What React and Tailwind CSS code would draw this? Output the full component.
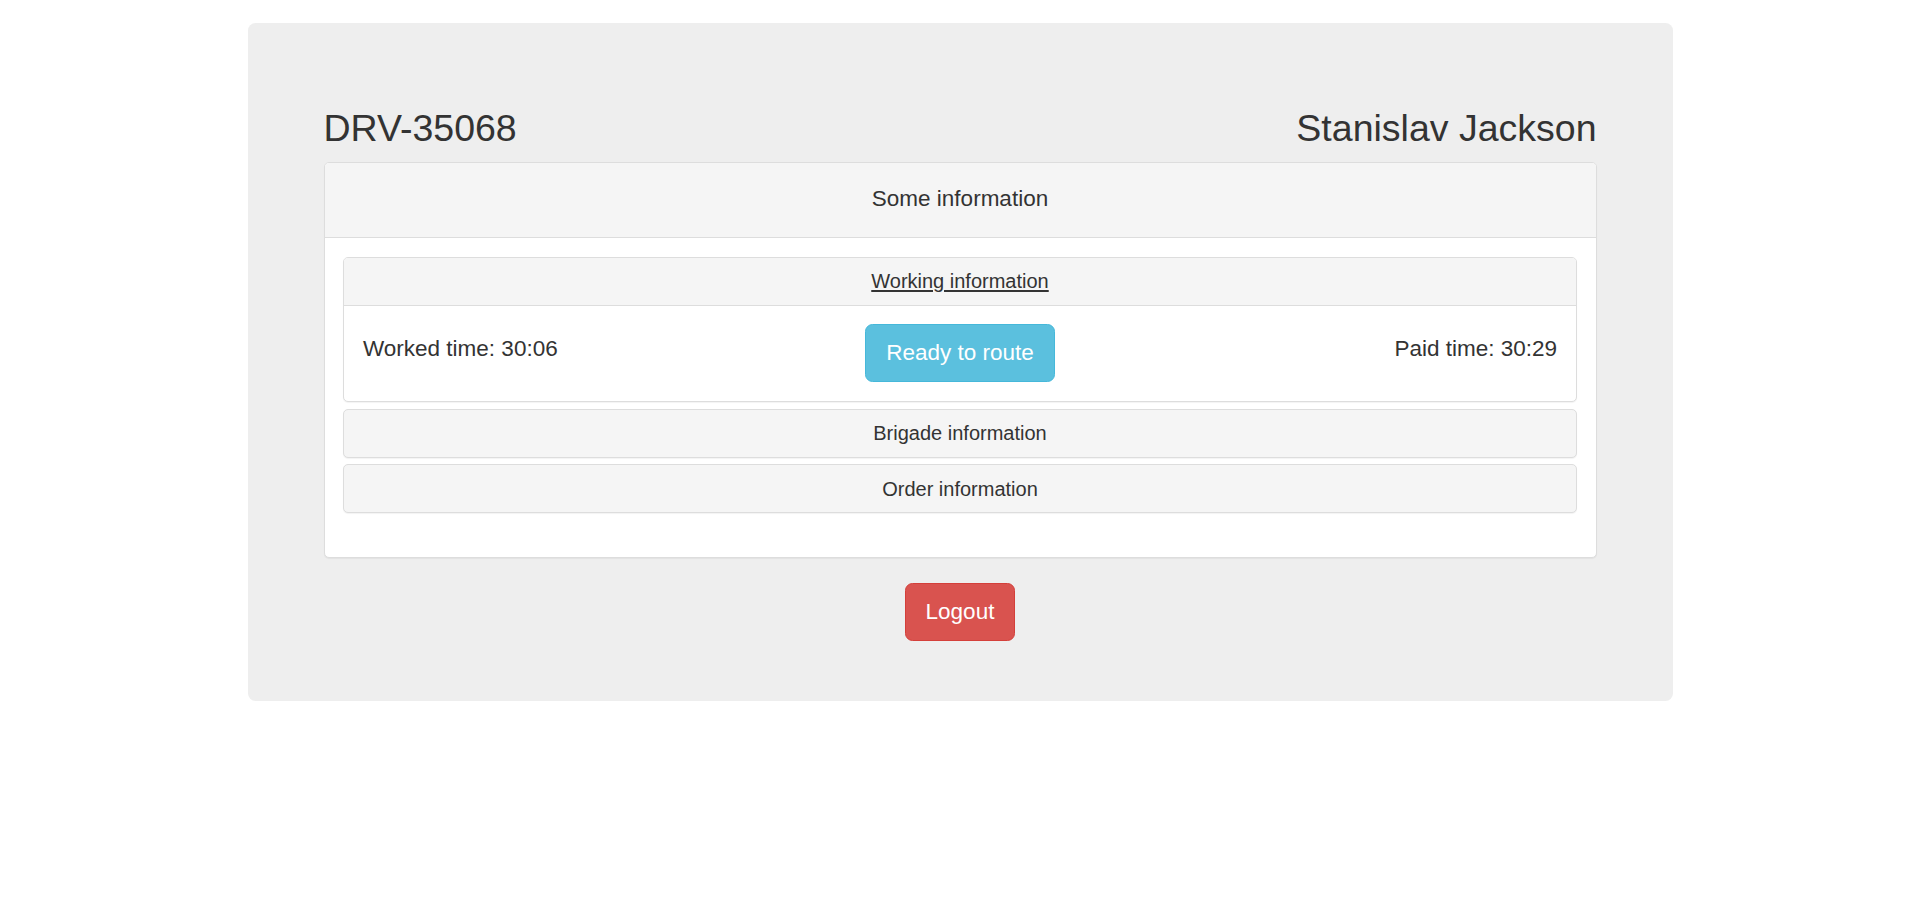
export default function App() {
  return (
    <div className="min-h-screen bg-white pt-[23px] font-['Liberation_Sans',Arial,Helvetica,sans-serif] text-[#333333]">
      <div className="mx-auto w-[1425px] rounded-[7.5px] bg-[#eeeeee] px-[76px] pt-[60px] pb-[60px]">
        <div className="mt-[25px] mb-[12.5px] flex items-start justify-between">
          <h2 className="text-[37.5px] font-normal leading-[1.1]">DRV-35068</h2>
          <h2 className="text-right text-[37.5px] font-normal leading-[1.1]">Stanislav Jackson</h2>
        </div>

        <div className="rounded-[5px] border border-[#dddddd] bg-white shadow-[0_1px_1px_rgba(0,0,0,0.05)]">
          <div className="flex h-[75px] items-center justify-center rounded-t-[4px] border-b border-[#dddddd] bg-[#f5f5f5]">
            <h4 className="text-[22.5px] font-normal leading-[1.1]">Some information</h4>
          </div>
          <div className="flex flex-col gap-[6.5px] px-[18.75px] pt-[18.75px] pb-[44px]">
            <div className="rounded-[5px] border border-[#dddddd] bg-white shadow-[0_1px_1px_rgba(0,0,0,0.05)]">
              <div className="rounded-t-[4px] border-b border-[#dddddd] bg-[#f5f5f5] py-[12.5px] text-center text-[20px] leading-[22px]">
                <a className="text-[#333333] underline underline-offset-[2px]" href="#">Working information</a>
              </div>
              <div className="grid grid-cols-3 items-start p-[18.75px]">
                <div className="mt-[12.5px] justify-self-start text-[22.5px] leading-[1.1]">Worked time: 30:06</div>
                <button className="justify-self-center rounded-[7.5px] border border-[#46b8da] bg-[#5bc0de] px-[20px] py-[13px] text-[22.5px] leading-[30px] text-white">
                  Ready to route
                </button>
                <div className="mt-[12.5px] justify-self-end text-right text-[22.5px] leading-[1.1]">Paid time: 30:29</div>
              </div>
            </div>
            <div className="rounded-[5px] border border-[#dddddd] bg-[#f5f5f5] py-[12.5px] text-center text-[20px] leading-[22px] shadow-[0_1px_1px_rgba(0,0,0,0.05)]">
              Brigade information
            </div>
            <div className="rounded-[5px] border border-[#dddddd] bg-[#f5f5f5] py-[12.5px] text-center text-[20px] leading-[22px] shadow-[0_1px_1px_rgba(0,0,0,0.05)]">
              Order information
            </div>
          </div>
        </div>

        <div className="mt-[25px] flex justify-center">
          <button className="rounded-[7.5px] border border-[#d43f3a] bg-[#d9534f] px-[20px] py-[13px] text-[22.5px] leading-[30px] text-white">
            Logout
          </button>
        </div>
      </div>
    </div>
  );
}
